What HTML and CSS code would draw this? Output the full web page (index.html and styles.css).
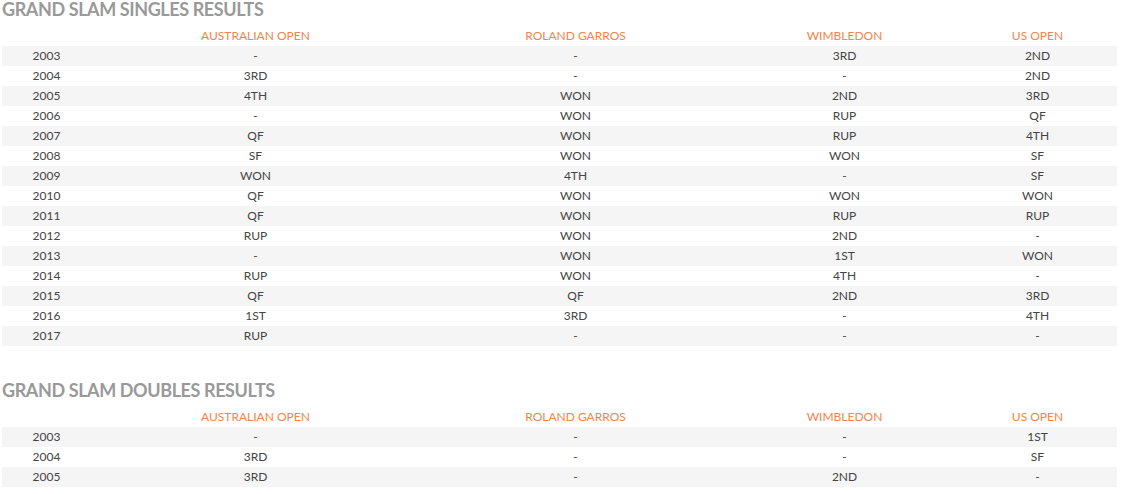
FILE: index.html
```html
<!DOCTYPE html>
<html>
<head>
<meta charset="utf-8">
<link rel="stylesheet" href="styles.css">
</head>
<body>
<section class="results">
  <h2 class="results-title">GRAND SLAM SINGLES RESULTS</h2>
  <table class="results-table">
    <colgroup><col class="c-year"><col class="c-ao"><col class="c-rg"><col class="c-w"><col class="c-us"></colgroup>
    <thead><tr><th></th><th>AUSTRALIAN OPEN</th><th>ROLAND GARROS</th><th>WIMBLEDON</th><th>US OPEN</th></tr></thead>
    <tbody>
      <tr><td>2003</td><td>-</td><td>-</td><td>3RD</td><td>2ND</td></tr>
      <tr><td>2004</td><td>3RD</td><td>-</td><td>-</td><td>2ND</td></tr>
      <tr><td>2005</td><td>4TH</td><td>WON</td><td>2ND</td><td>3RD</td></tr>
      <tr><td>2006</td><td>-</td><td>WON</td><td>RUP</td><td>QF</td></tr>
      <tr><td>2007</td><td>QF</td><td>WON</td><td>RUP</td><td>4TH</td></tr>
      <tr><td>2008</td><td>SF</td><td>WON</td><td>WON</td><td>SF</td></tr>
      <tr><td>2009</td><td>WON</td><td>4TH</td><td>-</td><td>SF</td></tr>
      <tr><td>2010</td><td>QF</td><td>WON</td><td>WON</td><td>WON</td></tr>
      <tr><td>2011</td><td>QF</td><td>WON</td><td>RUP</td><td>RUP</td></tr>
      <tr><td>2012</td><td>RUP</td><td>WON</td><td>2ND</td><td>-</td></tr>
      <tr><td>2013</td><td>-</td><td>WON</td><td>1ST</td><td>WON</td></tr>
      <tr><td>2014</td><td>RUP</td><td>WON</td><td>4TH</td><td>-</td></tr>
      <tr><td>2015</td><td>QF</td><td>QF</td><td>2ND</td><td>3RD</td></tr>
      <tr><td>2016</td><td>1ST</td><td>3RD</td><td>-</td><td>4TH</td></tr>
      <tr><td>2017</td><td>RUP</td><td>-</td><td>-</td><td>-</td></tr>
    </tbody>
  </table>
</section>
<section class="results">
  <h2 class="results-title">GRAND SLAM DOUBLES RESULTS</h2>
  <table class="results-table">
    <colgroup><col class="c-year"><col class="c-ao"><col class="c-rg"><col class="c-w"><col class="c-us"></colgroup>
    <thead><tr><th></th><th>AUSTRALIAN OPEN</th><th>ROLAND GARROS</th><th>WIMBLEDON</th><th>US OPEN</th></tr></thead>
    <tbody>
      <tr><td>2003</td><td>-</td><td>-</td><td>-</td><td>1ST</td></tr>
      <tr><td>2004</td><td>3RD</td><td>-</td><td>-</td><td>SF</td></tr>
      <tr><td>2005</td><td>3RD</td><td>-</td><td>2ND</td><td>-</td></tr>
    </tbody>
  </table>
</section>
</body>
</html>
```
FILE: styles.css
```css
html, body {
  margin: 0;
  padding: 0;
  background: #fff;
}
body {
  padding: 0 2px;
  font-family: Lato, "Open Sans", sans-serif;
  color: #444;
}
.results + .results {
  margin-top: 35px;
}
.results-title {
  margin: 0 0 8px;
  font-size: 18px;
  line-height: 18px;
  font-weight: 700;
  color: #999;
  letter-spacing: -0.4px;
}
.results-table {
  width: 1115px;
  border-collapse: collapse;
  table-layout: fixed;
  font-size: 12px;
}
.c-year { width: 89px; }
.c-ao { width: 329px; }
.c-rg { width: 311px; }
.c-w { width: 227px; }
.c-us { width: 159px; }
.results-table th,
.results-table td {
  height: 20px;
  padding: 0;
  text-align: center;
  line-height: 20px;
}
.results-table th {
  font-weight: 400;
  color: #f5834a;
}
.results-table tbody tr:nth-child(odd) {
  background: #f5f5f5;
}
```
